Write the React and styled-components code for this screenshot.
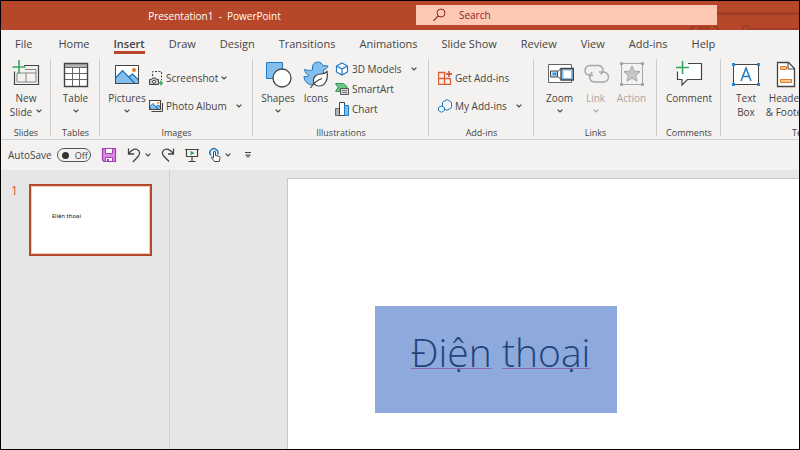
import React from "react";
import styled, { createGlobalStyle } from "styled-components";

const GlobalStyle = createGlobalStyle`
  * {
    box-sizing: border-box;
  }
  body {
    margin: 0;
    font-family: "Open Sans", "Noto Sans", sans-serif;
    font-size: 10px;
    color: #444444;
  }
  button, input {
    font: inherit;
    color: inherit;
  }
  button {
    margin: 0;
    padding: 0;
    border: none;
    background: none;
  }
  svg {
    display: block;
    flex: none;
  }
`;

const Window = styled.div`
  display: flex;
  flex-direction: column;
  min-height: 100vh;
  border: 1px solid #000000;
  background: #e6e6e6;
  overflow: hidden;
`;
const TitleBar = styled.header`
  display: grid;
  grid-template-columns: 52% 301px 1fr;
  align-items: center;
  height: 29px;
  background: #b7472a;
  overflow: hidden;
`;
const DocTitle = styled.h1`
  margin: 0;
  padding-left: 12px;
  font-size: 10px;
  font-weight: 400;
  line-height: 14px;
  text-align: center;
  white-space: pre;
  color: #ffffff;
`;
const SearchBox = styled.label`
  display: flex;
  align-items: center;
  gap: 13px;
  height: 20px;
  margin-bottom: 1px;
  padding-left: 17px;
  background: #fdc9b5;
  color: #7d1f1f;
`;
const SearchInput = styled.input`
  flex: 1;
  min-width: 0;
  padding: 0;
  border: none;
  outline: none;
  background: none;
  &::placeholder {
    color: #8c2626;
    opacity: 1;
  }
`;
const Decoration = styled.svg`
  overflow: visible;
`;
const Tabs = styled.nav`
  display: flex;
  gap: 24px;
  height: 28px;
  padding: 7px 14px 0;
  background: #f3f2f1;
`;
const Tab = styled.button`
  height: 17px;
  border-bottom: 3px solid ${(p) => (p.$active ? "#b7472a" : "transparent")};
  font-size: 11px;
  font-weight: ${(p) => (p.$active ? 600 : 400)};
  line-height: 14px;
  white-space: nowrap;
  &:first-child {
    margin-right: 2px;
  }
`;
const Ribbon = styled.div`
  display: flex;
  height: 82px;
  border-bottom: 1px solid #d2d0ce;
  background: #f3f2f1;
  overflow: hidden;
`;
const Group = styled.section`
  display: flex;
  flex: none;
  flex-direction: column;
  width: ${(p) => p.$width}px;
  background: linear-gradient(#cfcdcb, #cfcdcb) right 1px / 1px 77px no-repeat;
`;
const GroupBody = styled.div`
  display: flex;
  flex: 1;
  justify-content: ${(p) => (p.$inset ? "flex-start" : "center")};
  padding-left: ${(p) => p.$inset || 0}px;
`;
const GroupName = styled.h2`
  margin: 0;
  font-size: 9px;
  font-weight: 400;
  line-height: 12px;
  text-align: center;
`;
const BigButton = styled.button`
  display: flex;
  flex: none;
  flex-direction: column;
  align-items: center;
  align-self: flex-start;
  width: ${(p) => p.$width || 36}px;
  padding-top: 2px;
  line-height: 14px;
  white-space: nowrap;
  &:disabled {
    color: #a8a6a4;
  }
  svg:first-child {
    margin-bottom: 3px;
  }
`;
const BigLine = styled.span`
  display: flex;
  align-items: center;
  gap: 4px;
  height: 14px;
`;
const Stack = styled.div`
  display: flex;
  flex-direction: column;
  padding-top: ${(p) => (p.$roomy ? 6 : 1)}px;
`;
const SmallButton = styled.button`
  display: flex;
  align-items: center;
  gap: 3px;
  height: ${(p) => (p.$tall ? 28 : 20)}px;
  white-space: nowrap;
  svg:last-child:not(:first-child) {
    margin-left: ${(p) => p.$arrowGap || 0}px;
  }
`;
const QuickBar = styled.div`
  display: flex;
  align-items: center;
  gap: 10px;
  height: 30px;
  padding-left: 7px;
  background: #f3f2f1;
`;
const AutoSave = styled.label`
  display: flex;
  align-items: center;
  gap: 5px;
`;
const Pill = styled.span`
  display: flex;
  align-items: center;
  gap: 6px;
  width: 34px;
  height: 14px;
  padding-left: 4px;
  border: 1px solid #555555;
  border-radius: 7px;
  font-size: 9px;
`;
const Switch = styled.input`
  appearance: none;
  width: 7px;
  height: 7px;
  margin: 0;
  border-radius: 50%;
  background: #333333;
`;
const QuickButton = styled.button`
  display: flex;
  align-items: center;
  gap: 4px;
  margin-left: ${(p) => (p.$apart ? 4 : 0)}px;
`;
const Workspace = styled.main`
  display: grid;
  grid-template-columns: 169px 1fr;
  flex: 1;
`;
const Thumbnails = styled.aside`
  display: flex;
  align-items: flex-start;
  gap: 10px;
  padding: 14px 0 0 10px;
  border-right: 1px solid #cfcfcf;
`;
const SlideNumber = styled.span`
  width: 8px;
  font-size: 12px;
  line-height: 14px;
  color: #d35230;
`;
const Thumbnail = styled.button`
  width: 123px;
  height: 72px;
  padding: 0 0 8px 21px;
  border: 2px solid #b7472a;
  box-shadow: inset 0 0 0 1px #f6cdbf;
  background: #ffffff;
  font-family: "Noto Sans", sans-serif;
  font-size: 6px;
  text-align: left;
  color: #111111;
`;
const Canvas = styled.div`
  display: flex;
  padding: 8px 0 0 117px;
`;
const Slide = styled.article`
  flex: 1;
  padding: 127px 0 0 87px;
  border: solid #c6c6c6;
  border-width: 1px 0 0 1px;
  background: #ffffff;
`;
const Selection = styled.div`
  width: 242px;
  height: 107px;
  padding: 20px 0 0 36px;
  background: #8ea9db;
  font-size: 39px;
  font-weight: 300;
  line-height: 52px;
  white-space: nowrap;
  color: #23437c;
`;
const Word = styled.span`
  text-decoration: underline 1px #8a68ae;
  text-decoration-skip-ink: none;
  text-underline-offset: 1px;
`;

const Icon = ({ w = 28, h = 28, children }) => (
  <svg width={w} height={h} viewBox={`0 0 ${w} ${h}`} fill="none" stroke="#444444" aria-hidden="true">
    {children}
  </svg>
);

const Chevron = ({ color = "#444444" }) => (
  <Icon w={6} h={4}>
    <path d="M.6.6 3 3 5.400.6" stroke={color} strokeWidth="1.200" />
  </Icon>
);

const Circuit = () => (
  <Decoration width="82" height="29" viewBox="0 0 82 29" fill="none" stroke="#9c3d25" aria-hidden="true">
    <path d="M0 12.500h82" strokeWidth="3" />
    <path d="M33 28h49" strokeWidth="2" />
    <circle cx="29" cy="28" r="3" strokeWidth="2" />
    <path d="M-27 30c1-3 3-4.500 5-5M2 30c-1-3-3-4.500-5-5M-19 26.500h12M-17 29v-2M-9 29v-2" strokeWidth="2" />
  </Decoration>
);

const SearchIcon = () => (
  <Icon w={13} h={14}>
    <g stroke="#8c2626">
      <circle cx="8" cy="5" r="4" />
      <path d="M5.200 7.800.5 12.800" strokeWidth="1.200" />
    </g>
  </Icon>
);

const NewSlideIcon = () => (
  <Icon>
    <path d="M12 5.500h14.500v19h-24v-13" strokeWidth="1.200" />
    <path d="M13 9.500h11v12.500h-19v-9M5 13h19M14 13v9" stroke="#858585" />
    <path d="M7 0v13.500M.5 7h13" stroke="#36a85c" strokeWidth="1.600" />
  </Icon>
);

const TableIcon = () => (
  <Icon>
    <path d="M2.500 3.500h23v23h-23z" fill="#ffffff" />
    <path d="M3 4h22v3H3z" fill="#b4b4b4" stroke="none" />
    <path d="M2.500 7.500h23M2.500 13.500h23M2.500 19.500h23M10.500 7.500v19M17.500 7.500v19" stroke="#666666" />
    <path d="M2.500 3.500h23v23h-23z" strokeWidth="1.400" />
  </Icon>
);

const PicturesIcon = () => (
  <Icon>
    <path d="M2.500 5.500h23v18h-23z" fill="#ffffff" />
    <path d="M3 17.500 9.500 10.500 19 20l0 3.500H3z" fill="#83beec" stroke="none" />
    <path d="M14 18.500 19 14l6.500 6v3.500H18z" fill="#83beec" stroke="none" />
    <path d="M2.500 18 9.500 10.500 22 23.500M15.500 17 19.500 14l6 6" stroke="#1e6fb5" strokeWidth="1.200" />
    <path d="M2.500 5.500h23v18h-23z" />
    <circle cx="21" cy="10" r="2" fill="#e07b28" stroke="none" />
  </Icon>
);

const ScreenshotIcon = () => (
  <Icon w={14} h={16}>
    <path d="M3.500 6V1.500h9V10" strokeDasharray="2 1.500" />
    <path d="M.5 9.500h2l1-1.500h3l1 1.500h2v5H.5z" fill="#c8c8c8" />
    <circle cx="5" cy="11.800" r="1.500" fill="#ffffff" />
    <path d="M12 10.500v5M9.500 13h4.500" stroke="#36a85c" strokeWidth="1.400" />
  </Icon>
);

const AlbumIcon = () => (
  <Icon w={14} h={14}>
    <path d="M2.500 12.500h11V4" />
    <path d="M.5 1.500h11v9H.5z" fill="#ffffff" />
    <path d="M1 7.500 4 4.500l5 6H1zM7 7.500l2-1.500 2.500 2v2.500H9z" fill="#83beec" stroke="#1e6fb5" />
    <path d="M.5 1.500h11v9H.5z" strokeWidth="1.200" />
    <circle cx="9" cy="3.800" r="1" fill="#e07b28" stroke="none" />
  </Icon>
);

const ShapesIcon = () => (
  <Icon>
    <path d="M2.500 2.500h16v16h-16z" fill="#83beec" stroke="#1e7ac4" />
    <circle cx="18" cy="18" r="9" fill="#ffffff" strokeWidth="1.300" stroke="#444444" />
  </Icon>
);

const IconsIcon = () => (
  <Icon>
    <path
      d="M2.500 9.500c3 1 5.500 1 8 .5V7c0-3 2.500-5 5.500-5 2.500 0 4 1.500 4.800 3.500L26 6c-.5 2-2 3.500-4.500 4-.5 2.500 1 4-1 7L10 25C4 24 2 20 2 16.500 4 17 6 16.500 7 15.500c-2.500-1-4-3-4.500-6z"
      fill="#83beec"
      stroke="#1e7ac4"
    />
    <path
      d="M12 23.500c-2-6 2-9.500 7-9.500 3 0 4.500-.8 6-2.500 1.500 8-2 14.500-8 14.500-2 0-4-.8-5-2.500z"
      fill="#ffffff"
      strokeWidth="1.200"
    />
    <path d="M8.500 28c3-5 7-8 11.500-9.500" strokeWidth="1.200" />
  </Icon>
);

const CubeIcon = () => (
  <Icon w={14} h={14}>
    <path
      d="m7 1 5.500 3v6L7 13 1.500 10V4zM1.500 4 7 7l5.500-3M7 7v6"
      fill="#ffffff"
      stroke="#1e7ac4"
      strokeWidth="1.200"
    />
  </Icon>
);

const SmartArtIcon = () => (
  <Icon w={14} h={14}>
    <path d="M.5 1.500h8l4 3.500-2 1.500h-5l-1 3H.5L3 5.500z" fill="#6cc48a" stroke="#2f9a55" />
    <path d="M5.500 6.500h8v6h-8z" fill="#d8d8d8" stroke="#555555" />
    <path d="M7 8.500h5M7 10.500h5" stroke="#777777" />
  </Icon>
);

const ChartIcon = () => (
  <Icon w={14} h={14}>
    <path d="M.5 6.500h4v7h-4z" fill="#b4b4b4" stroke="#666666" />
    <path d="M4.500 .5h5v13h-5z" fill="#ffffff" />
    <path d="M9.500 3.500h4v10h-4z" fill="#83beec" stroke="#1e7ac4" />
  </Icon>
);

const StoreIcon = () => (
  <Icon w={14} h={14}>
    <path d="M7.500 1.500h-7v12h12v-6M.5 7.500h12M6.500 1.500v12" stroke="#dc5b2f" strokeWidth="1.300" />
    <path d="M11 0v6M8 3h6" stroke="#c3431d" strokeWidth="1.400" />
  </Icon>
);

const HexagonsIcon = () => (
  <Icon w={14} h={14}>
    <g stroke="#1e7ac4" fill="#f8f8f8">
      <path d="m9 .6 4.500 2.700v5.400L9 11.400 4.500 8.700V3.300z" />
      <path d="m3.500 7 3 1.500v3l-3 1.800-3-1.800v-3z" />
    </g>
  </Icon>
);

const ZoomIcon = () => (
  <Icon>
    <path d="M2.500 4.500h23v18h-23z" fill="#ffffff" stroke="#666666" />
    <path d="M4.500 11h7v6h-7z" fill="#cde6f8" />
    <path d="M6.500 12.500h4v3h-4z" fill="#3b96dc" stroke="none" />
    <path d="m11.500 11.500 4-3M11.500 16.500l4 3" />
    <path d="M15 8.500h12.400v11.500H15z" fill="#83beec" strokeWidth="1.300" />
    <path d="M17.500 10.500h7.500v7.500h-7.500z" fill="#ffffff" stroke="none" />
  </Icon>
);

const LinkIcon = () => (
  <Icon>
    <g stroke="#a8a6a4" strokeWidth="1.400">
      <path d="M11 15.500H8a5 5 0 0 1 0-10h8a4.800 4.800 0 0 1 2.500 9" />
      <path d="M10.500 12.500a5 5 0 0 0 2.500 9.500h8.500a5 5 0 0 0 0-10H17" />
    </g>
  </Icon>
);

const ActionIcon = () => (
  <Icon>
    <path d="M3.500 3.500h21v21h-21z" stroke="#a8a6a4" />
    <path d="m14 6 2.300 5.200 5.700.5-4.300 3.800 1.300 5.600-5-3-5 3 1.300-5.600L6 11.700l5.700-.5z" fill="#c8c6c4" stroke="#a8a6a4" />
    <path d="M2 2h3v3H2zM23 2h3v3h-3zM2 23h3v3H2zM23 23h3v3h-3z" fill="#a8a6a4" stroke="none" />
  </Icon>
);

const CommentIcon = () => (
  <Icon>
    <path d="M12 3.500h14.500v16H12L7 25v-5.500H2.500v-9" fill="#ffffff" stroke="none" />
    <path d="M13 3.500h13.500v16H12.500L7 25v-5.500H2.500v-8" strokeWidth="1.200" />
    <path d="M7.500 1v13M1 7.500h13" stroke="#36a85c" strokeWidth="1.600" />
  </Icon>
);

const TextBoxIcon = () => (
  <Icon>
    <path d="M1.500 4.500h25v20h-25z" fill="#ffffff" />
    <path d="M9 21 14 8l5 13M10.700 16.500h6.600" stroke="#1e7ac4" strokeWidth="1.500" />
    <path d="M0 3h3v3H0zM25 3h3v3h-3zM0 23h3v3H0zM25 23h3v3h-3z" fill="#2b88d8" stroke="none" />
  </Icon>
);

const HeaderFooterIcon = () => (
  <Icon>
    <path d="M5.500 2.500h11l6 6v18h-17z" fill="#ffffff" strokeWidth="1.300" />
    <path d="M16 2.500v6.500h6.500" />
    <path d="M8.500 6.500h6v3h-6zM8.500 19.500h11v3h-11z" fill="#fbc98a" stroke="#e07b28" />
  </Icon>
);

const SaveIcon = () => (
  <Icon w={16} h={16}>
    <path d="M1.500 1.500h13v13H3l-1.500-1.500z" fill="#d58be0" stroke="#a43cb4" strokeWidth="1.200" />
    <path d="M4.500 1.500h7v5h-7z" fill="#ffffff" stroke="#a43cb4" />
    <path d="M4.500 10.500h7v4h-7z" fill="#ffffff" stroke="#a43cb4" />
    <path d="M6 12h2v3H6z" fill="#a43cb4" stroke="none" />
  </Icon>
);

const UndoIcon = () => (
  <Icon w={14} h={16}>
    <path d="M1.500 1.500V7H7M1.500 7C5 2.500 7.500 1.500 10 2.500c3 1.200 3.300 4.500 1.500 6.500L6 15" strokeWidth="1.300" />
  </Icon>
);

const RedoIcon = () => (
  <Icon w={14} h={16}>
    <path d="M12.500 1.500V7H7M12.500 7C9 2.500 6.500 1.500 4 2.500 1 3.700.7 6.500 2.500 8.800L8 14.500" strokeWidth="1.300" />
  </Icon>
);

const SlideShowIcon = () => (
  <Icon w={14} h={16}>
    <path d="M0 2.500h14M1.500 2.500v7h11v-7M7 10v4M3.500 14.500h7" strokeWidth="1.200" />
    <path d="m5.500 3.800 4 2.300-4 2.300z" fill="#36a85c" stroke="none" />
  </Icon>
);

const TouchIcon = () => (
  <Icon w={12} h={16}>
    <path d="M2 8.500a4 4 0 1 1 6.500-1" stroke="#1e7ac4" strokeWidth="1.500" />
    <path
      d="M4.500 11V5c0-1.300 2-1.300 2 0v3.500l3.500.8c.8.200 1.200.8 1 1.700l-.8 3.500H5.500L2.500 11c-.5-1 .8-1.500 2 0z"
      fill="#ffffff"
    />
  </Icon>
);

const MoreIcon = () => (
  <Icon w={6} h={8}>
    <path d="M0 1.500h6M.8 4 3 6.300 5.200 4z" />
  </Icon>
);

const tabs = [
  "File", "Home", "Insert", "Draw", "Design", "Transitions",
  "Animations", "Slide Show", "Review", "View", "Add-ins", "Help",
];

function RibbonGroup({ name, width, inset, children }) {
  return (
    <Group $width={width}>
      <GroupBody $inset={inset}>{children}</GroupBody>
      <GroupName>{name}</GroupName>
    </Group>
  );
}

function Big({ icon, label, second, arrow, width, disabled }) {
  return (
    <BigButton type="button" $width={width} disabled={disabled}>
      {icon}
      <BigLine>{label}</BigLine>
      {(second || arrow) && (
        <BigLine>
          {second}
          {arrow && <Chevron color={disabled ? "#a8a6a4" : undefined} />}
        </BigLine>
      )}
    </BigButton>
  );
}

function Small({ icon, label, tall, arrowGap }) {
  return (
    <SmallButton type="button" $tall={tall} $arrowGap={arrowGap}>
      {icon}
      <span>{label}</span>
      {arrowGap !== undefined && <Chevron />}
    </SmallButton>
  );
}

export default function App() {
  return (
    <Window>
      <GlobalStyle />
      <TitleBar>
        <DocTitle>{"Presentation1  -  PowerPoint"}</DocTitle>
        <SearchBox>
          <SearchIcon />
          <SearchInput type="text" placeholder="Search" aria-label="Search" />
        </SearchBox>
        <Circuit />
      </TitleBar>
      <Tabs>
        {tabs.map((tab) => (
          <Tab key={tab} type="button" $active={tab === "Insert"}>
            {tab}
          </Tab>
        ))}
      </Tabs>
      <Ribbon>
        <RibbonGroup name="Slides" width={50}>
          <Big icon={<NewSlideIcon />} label="New" second="Slide" arrow />
        </RibbonGroup>
        <RibbonGroup name="Tables" width={49}>
          <Big icon={<TableIcon />} label="Table" arrow />
        </RibbonGroup>
        <RibbonGroup name="Images" width={153} inset={5}>
          <Big icon={<PicturesIcon />} label="Pictures" arrow width={44} />
          <Stack $roomy>
            <Small icon={<ScreenshotIcon />} label="Screenshot" tall arrowGap={0} />
            <Small icon={<AlbumIcon />} label="Photo Album" tall arrowGap={6} />
          </Stack>
        </RibbonGroup>
        <RibbonGroup name="Illustrations" width={176} inset={6}>
          <Big icon={<ShapesIcon />} label="Shapes" arrow width={38} />
          <Big icon={<IconsIcon />} label="Icons" width={38} />
          <Stack>
            <Small icon={<CubeIcon />} label="3D Models" arrowGap={6} />
            <Small icon={<SmartArtIcon />} label="SmartArt" />
            <Small icon={<ChartIcon />} label="Chart" />
          </Stack>
        </RibbonGroup>
        <RibbonGroup name="Add-ins" width={105} inset={9}>
          <Stack $roomy>
            <Small icon={<StoreIcon />} label="Get Add-ins" tall />
            <Small icon={<HexagonsIcon />} label="My Add-ins" tall arrowGap={6} />
          </Stack>
        </RibbonGroup>
        <RibbonGroup name="Links" width={123}>
          <Big icon={<ZoomIcon />} label="Zoom" arrow />
          <Big icon={<LinkIcon />} label="Link" arrow disabled />
          <Big icon={<ActionIcon />} label="Action" disabled />
        </RibbonGroup>
        <RibbonGroup name="Comments" width={64}>
          <Big icon={<CommentIcon />} label="Comment" />
        </RibbonGroup>
        <RibbonGroup name="Text" width={160} inset={7}>
          <Big icon={<TextBoxIcon />} label="Text" second="Box" width={36} />
          <Big icon={<HeaderFooterIcon />} label="Header" second="& Footer" width={44} />
        </RibbonGroup>
      </Ribbon>
      <QuickBar>
        <AutoSave>
          AutoSave
          <Pill>
            <Switch type="checkbox" role="switch" />
            Off
          </Pill>
        </AutoSave>
        <QuickButton type="button" aria-label="Save">
          <SaveIcon />
        </QuickButton>
        <QuickButton type="button" aria-label="Undo">
          <UndoIcon />
          <Chevron />
        </QuickButton>
        <QuickButton type="button" aria-label="Redo">
          <RedoIcon />
        </QuickButton>
        <QuickButton type="button" aria-label="Start from beginning">
          <SlideShowIcon />
        </QuickButton>
        <QuickButton type="button" aria-label="Touch mode">
          <TouchIcon />
          <Chevron />
        </QuickButton>
        <QuickButton type="button" aria-label="Customize toolbar" $apart>
          <MoreIcon />
        </QuickButton>
      </QuickBar>
      <Workspace>
        <Thumbnails>
          <SlideNumber>1</SlideNumber>
          <Thumbnail type="button">Điện thoại</Thumbnail>
        </Thumbnails>
        <Canvas>
          <Slide>
            <Selection>
              <Word>Điện</Word> <Word>thoại</Word>
            </Selection>
          </Slide>
        </Canvas>
      </Workspace>
    </Window>
  );
}
